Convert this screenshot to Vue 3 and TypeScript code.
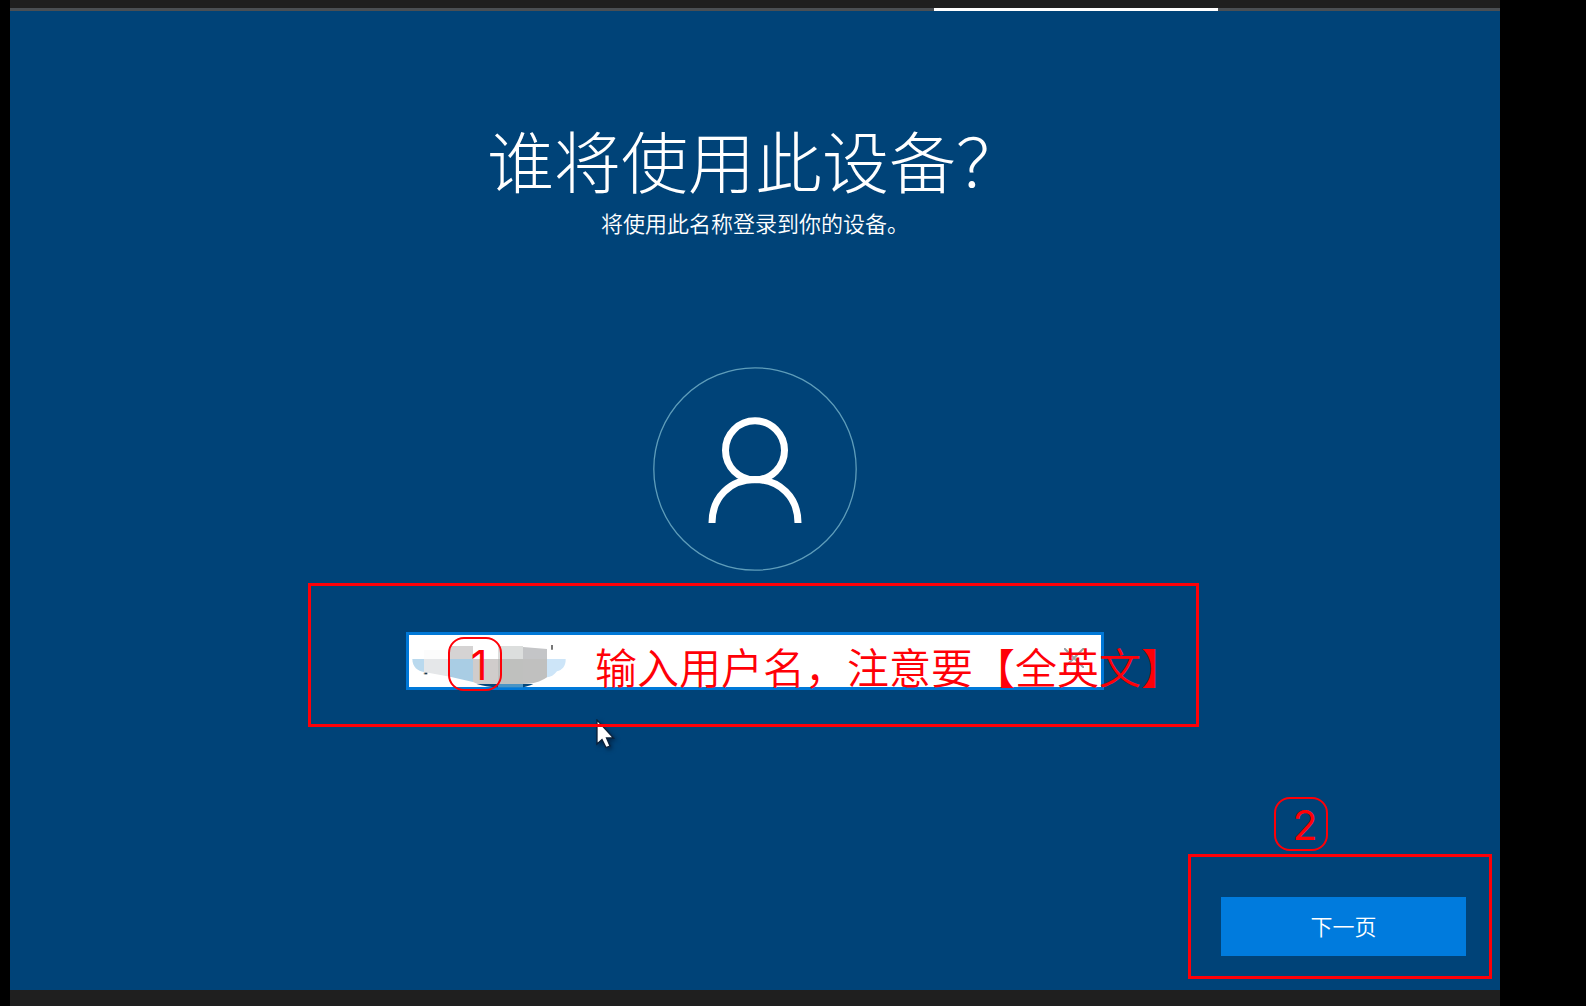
<script setup lang="ts">
import { ref } from 'vue'

const userName = ref('')

function clearName(): void {
  userName.value = ''
}
</script>

<template>
  <div class="screen">
    <div class="setup">
      <div class="progress" role="progressbar" aria-label="安装进度">
        <div class="progress-run"></div>
      </div>

      <main class="panel">
        <header class="heading">
          <h1>谁将使用此设备？</h1>
          <p>将使用此名称登录到你的设备。</p>
        </header>

        <svg class="avatar" viewBox="0 0 204 204" aria-hidden="true">
          <circle cx="102" cy="102" r="101.2" fill="none" stroke="#5e9dba" stroke-width="1.3" />
          <g fill="none" stroke="#fff" stroke-width="7">
            <circle cx="102" cy="83.3" r="29.5" />
            <path d="M59 156c0-26 18.500-43.400 43-43.400s43 17.400 43 43.400" />
          </g>
        </svg>

        <form class="name-form" @submit.prevent>
          <div class="name-field">
            <input v-model="userName" type="text" aria-label="用户名" autocomplete="off" />
            <svg class="mosaic" viewBox="0 0 480 174" aria-hidden="true">
              <path fill="#b9d9ee" d="M19 81H54V120C35 117 19 105 19 81Z" />
              <path fill="#fcfcfc" d="M54 54H132V81H54Z" />
              <path fill="#e5e7e9" d="M54 81H132V134L54 120Z" />
              <path fill="#d5d3d3" d="M132 42H201V81H132Z" />
              <path fill="#a9cde4" d="M132 81H201V150L132 134Z" />
              <path fill="#d0cccb" d="M201 81H276V156H215L201 150Z" />
              <path fill="#dcdedd" d="M276 42H351V81H276Z" />
              <path fill="#bfc0be" d="M276 81H351V156H276Z" />
              <path fill="#c4c5c7" d="M351 45L423 51V81H351Z" />
              <path fill="#c0c0bf" d="M351 81H423V136C400 150 385 156 351 156Z" />
              <path fill="#02477c" d="M212 156H276V166C250 165 230 161 212 156Z" />
              <path fill="#4a94c4" d="M276 156H351V166H276Z" />
              <path fill="#02477c" d="M351 156H382C370 161 361 164 351 166Z" />
              <path fill="#cde5f8" d="M423 81H479C480 102 468 115 453 118C444 130 434 135 423 136Z" />
              <path fill="#777" d="M435 39H441V53H435Z" />
              <path fill="#d6a36a" d="M53 122H58V127H53Z" />
              <path fill="#163a5c" d="M56 122H64V127H56Z" />
            </svg>
            <button class="clear" type="button" aria-label="清除" @click="clearName">
              <svg viewBox="0 0 20 20" aria-hidden="true">
                <path d="M0 0L20 20M20 0L0 20" stroke="#9a9fa3" stroke-width="2" fill="none" />
              </svg>
            </button>
            <svg class="pointer" viewBox="0 0 20 30" aria-hidden="true">
              <path
                d="M2 1V25L7 20.500L11 28.500L15 27L11.500 19H18.500Z"
                fill="#fff"
                stroke="#0b2038"
                stroke-width="1.300"
              />
            </svg>
            <div class="frame frame-name"></div>
            <span class="badge badge-one">1</span>
            <span class="note">输入用户名，注意要【全英文】</span>
          </div>
        </form>

        <footer class="actions">
          <div class="next">
            <button class="next-button" type="button">下一页</button>
            <div class="frame frame-next"></div>
            <span class="badge badge-two">2</span>
          </div>
        </footer>
      </main>
    </div>
  </div>
</template>

<style>
body {
  margin: 0;
  background: #000;
}
</style>

<style scoped>
.screen {
  box-sizing: border-box;
  display: flex;
  min-height: 100vh;
  padding: 0 86px 0 10px;
  background: #000;
  color: #fff;
  font-family: 'Noto Sans CJK SC', sans-serif;
}

.setup {
  flex: 1;
  display: flex;
  flex-direction: column;
  padding: 8px 0 16px;
  background: #1f1f1f;
}

.progress {
  display: flex;
  height: 3px;
  background: #4b4f53;
}

.progress-run {
  width: 284px;
  margin-left: 62%;
  background: #fff;
}

.panel {
  flex: 1;
  display: flex;
  flex-direction: column;
  align-items: center;
  background: #004378;
}

.heading {
  padding-top: 108px;
  text-align: center;
}

h1 {
  margin: 0;
  font-size: 67px;
  font-weight: 300;
  line-height: 80px;
}

p {
  margin: 8px 0 0;
  font-size: 22px;
  font-weight: 350;
  line-height: 30px;
}

.avatar {
  width: 204px;
  height: 204px;
  margin-top: 130px;
}

.name-form {
  margin-top: 61px;
}

.name-field {
  position: relative;
  width: 698px;
}

input {
  display: block;
  box-sizing: border-box;
  width: 100%;
  height: 58px;
  padding: 0 48px 0 12px;
  border: 3px solid #0078d7;
  border-radius: 0;
  outline: none;
  background: #fff;
  color: #000;
  font: inherit;
  font-size: 22px;
}

.mosaic {
  position: absolute;
  top: 0;
  left: 0;
  width: 160px;
  height: 58px;
}

.clear {
  position: absolute;
  top: 16px;
  right: 20px;
  width: 20px;
  height: 20px;
  padding: 0;
  border: 0;
  background: none;
}

.clear svg {
  display: block;
}

.pointer {
  position: absolute;
  top: 87px;
  left: 189px;
  width: 20px;
  height: 30px;
  filter: drop-shadow(2px 2px 2px #00264a);
}

.frame {
  position: absolute;
  border: 3px solid #ff0007;
  pointer-events: none;
}

.frame-name {
  inset: -49px -95px -37px -98px;
}

.badge {
  position: absolute;
  box-sizing: border-box;
  width: 54px;
  height: 54px;
  padding-left: 8px;
  border: 2px solid #ff0007;
  border-radius: 16px;
  color: #ff0007;
  font-family: Inter, sans-serif;
  font-size: 41px;
  line-height: 52px;
  text-align: center;
}

.badge-one {
  top: 5px;
  left: 42px;
}

.note {
  position: absolute;
  top: 4px;
  left: 189px;
  color: #ff0007;
  font-size: 42px;
  font-weight: 350;
  line-height: 60px;
  white-space: nowrap;
}

.actions {
  display: flex;
  align-self: stretch;
  justify-content: flex-end;
  margin-top: auto;
  padding: 0 34px 34px;
}

.next {
  position: relative;
}

.next-button {
  display: block;
  width: 245px;
  height: 59px;
  padding: 0 0 4px;
  border: 0;
  background: #007bdd;
  color: #fff;
  font: inherit;
  font-size: 22px;
  font-weight: 350;
}

.frame-next {
  inset: -43px -26px -23px -33px;
}

.badge-two {
  top: -100px;
  left: 53px;
}
</style>
